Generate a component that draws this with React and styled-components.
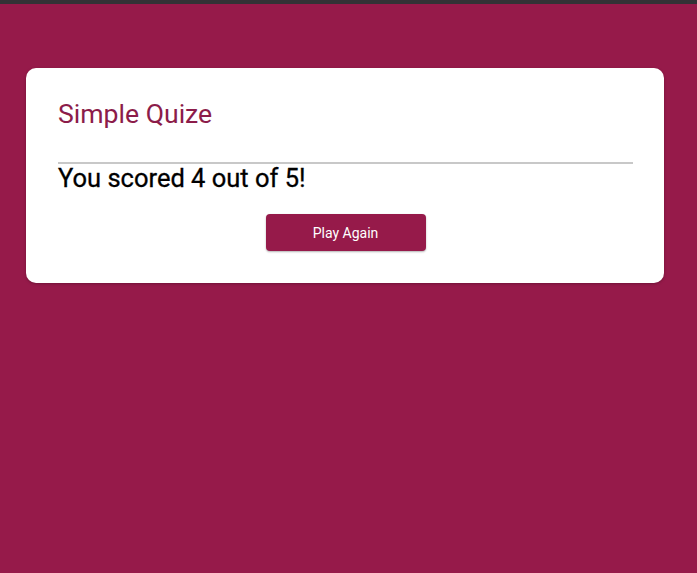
import React from "react";
import styled, { createGlobalStyle } from "styled-components";

const Global = createGlobalStyle`
  html, body { margin: 0; padding: 0; }
  body {
    background: #961a4a;
    font-family: Roboto, "Noto Sans", sans-serif;
    min-height: 573px;
  }
`;

const TopBar = styled.div`
  height: 4px;
  background: #333236;
`;

const Page = styled.main`
  padding: 64px 33px 0 26px;
`;

const Card = styled.section`
  background: #fff;
  border-radius: 10px;
  padding: 28px 31px 32px 32px;
  box-shadow: 0 1px 3px rgba(0, 0, 0, 0.25);
`;

const Title = styled.h1`
  margin: 0;
  font-size: 26.6px;
  font-weight: 400;
  line-height: 36px;
  color: #8c1c4a;
`;

const Divider = styled.hr`
  margin: 30px 0 0;
  border: 0;
  height: 2px;
  background: #c8c8c8;
`;

const Score = styled.p`
  margin: 0;
  font-size: 25.5px;
  font-weight: 400;
  line-height: 28px;
  color: #000;
  -webkit-text-stroke: 0.3px #000;
`;

const Actions = styled.div`
  display: flex;
  justify-content: center;
  margin-top: 22px;
`;

const Button = styled.button`
  width: 160px;
  height: 37px;
  border: 0;
  border-radius: 4px;
  background: #961a4a;
  color: #fff;
  font-family: Roboto, "Noto Sans", sans-serif;
  font-size: 14px;
  box-shadow: 0 1px 2px rgba(0, 0, 0, 0.3);
  cursor: pointer;
`;

export default function App() {
  return (
    <>
      <Global />
      <TopBar />
      <Page>
        <Card>
          <Title>Simple Quize</Title>
          <Divider />
          <Score>You scored 4 out of 5!</Score>
          <Actions>
            <Button>Play Again</Button>
          </Actions>
        </Card>
      </Page>
    </>
  );
}
